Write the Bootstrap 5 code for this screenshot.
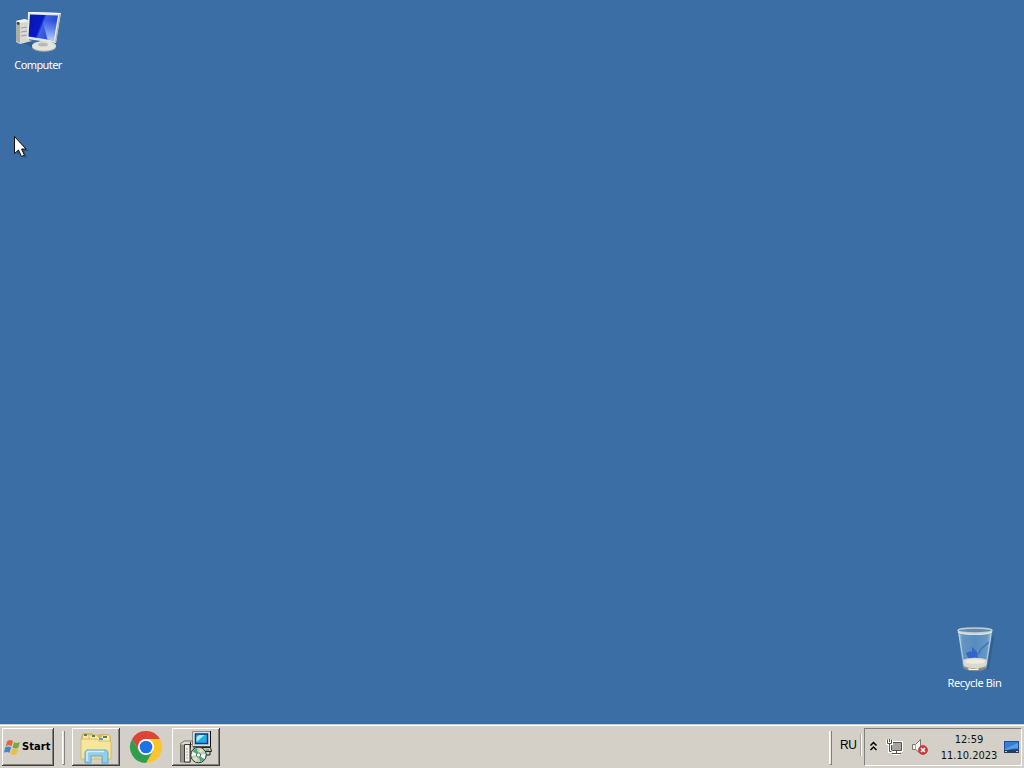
<!DOCTYPE html>
<html lang="en">
<head>
    <meta charset="UTF-8">
    <meta name="viewport" content="width=device-width, initial-scale=1.0">
    <title>Desktop</title>
    <link href="https://cdn.jsdelivr.net/npm/bootstrap@5.3.0/dist/css/bootstrap.min.css" rel="stylesheet">
    <style>
        :root {
            --desktop: #3a6ea5;
            --face: #d4d0c8;
            --shade: #808080;
            --dark: #404040;
        }

        body {
            background-color: var(--desktop);
            color: #111;
            font-family: "DejaVu Sans Condensed", "DejaVu Sans", sans-serif;
            font-stretch: condensed;
            font-size: 11px;
            line-height: 16px;
            cursor: default;
        }

        svg {
            display: block;
            flex: none;
        }

        .shortcut {
            width: 76px;
            color: #fff;
            font-family: "Noto Sans", sans-serif;
            font-stretch: normal;
            letter-spacing: -.6px;
            line-height: 14px;
        }

        .shortcut-bin {
            width: 99px;
            padding-bottom: 34px;
            letter-spacing: -.35px;
        }

        .pointer {
            left: 14px;
            top: 136px;
        }

        .taskbar {
            height: 44px;
            background-color: var(--face);
            border-top: 1px solid var(--face);
            box-shadow: inset 0 1px #fff;
            padding: 3px 2px 1px 2px;
        }

        .task-button {
            height: 38px;
            padding: 0;
            color: #000;
            background-color: var(--face);
            border: 0;
            border-radius: 0;
            box-shadow: inset -1px -1px var(--dark), inset 1px 1px #fff, inset -2px -2px var(--shade);
        }

        .start-button {
            width: 52px;
            padding-left: 2px;
            font-weight: bold;
            font-size: 11px;
            letter-spacing: .1px;
        }

        .start-button span {
            padding: 1px 0 0 1px;
        }

        .task-window {
            width: 48px;
        }

        .task-flat {
            width: 52px;
            padding-top: 3px;
        }

        .grip {
            width: 3px;
            height: 34px;
            margin-top: 3px;
            background-color: #ebe8e2;
            border-left: 1px solid #fff;
            border-right: 1px solid var(--shade);
            border-bottom: 1px solid var(--shade);
        }

        .grip-start {
            margin-right: 7px;
        }

        .tray {
            width: 158px;
            height: 38px;
            margin-left: 2px;
            border: 1px solid;
            border-color: var(--shade) #fff #fff var(--shade);
        }

        .lang-line {
            width: 1px;
            height: 22px;
            margin-top: 6px;
            background-color: #fff;
            border-left: 1px solid #aaa69f;
            box-sizing: content-box;
        }

        .lang {
            width: 16px;
            padding-top: 9px;
            color: #000;
            font-family: "Liberation Sans", sans-serif;
            font-stretch: normal;
            font-size: 12px;
            letter-spacing: -.5px;
        }

        .clock {
            width: 58px;
            margin-left: 11px;
            padding-top: 2px;
        }

        .show-desktop {
            margin-left: 6px;
        }
    </style>
</head>
<body class="vh-100 overflow-hidden d-flex flex-column">
    <main class="flex-grow-1 d-flex justify-content-between position-relative">
        <!-- Computer -->
        <div class="shortcut d-flex flex-column align-items-center align-self-start pt-2">
            <svg width="48" height="50" viewBox="0 0 48 50">
                <defs>
                    <linearGradient id="screen" x1="0" y1="0" x2="1" y2=".35">
                        <stop offset="0" stop-color="#0718a0"/>
                        <stop offset=".48" stop-color="#0719cc"/>
                        <stop offset=".56" stop-color="#3d62e4"/>
                        <stop offset="1" stop-color="#1d46d8"/>
                    </linearGradient>
                    <linearGradient id="glow" x1="0" y1="0" x2="0" y2="1">
                        <stop offset=".2" stop-color="#b8d4ff" stop-opacity="0"/>
                        <stop offset="1" stop-color="#d5e7ff" stop-opacity=".85"/>
                    </linearGradient>
                </defs>
                <path d="M10 35l5-2 5 3-3 3z" fill="#244d7b" opacity=".5"/>
                <path d="M2 13l9-2 4 2v19l3 1-12 3-4-2z" fill="#d9d9d4"/>
                <path d="M2 13l4 1v21l-4-2z" fill="#aaaea9"/>
                <path d="M2 13l9-2 4 2-9 2z" fill="#f3f3ee"/>
                <circle cx="4.200" cy="15.500" r="1.400" fill="#314948"/>
                <path d="M7 20l6-1M7 24l6-1M7 28l6-1" stroke="#999d9a"/>
                <path d="M26 32l9 1 1 5H24z" fill="#aeb5b2"/>
                <ellipse cx="30" cy="39" rx="12" ry="5" fill="#989e98"/>
                <ellipse cx="30" cy="38" rx="12" ry="4.800" fill="#e2e4dd"/>
                <ellipse cx="29" cy="36.500" rx="5" ry="2" fill="#b3bbb6"/>
                <path d="M14 4l33 1-5 30-29-4z" fill="#e4e6e1"/>
                <path d="M14 4l33 1v1L14 5z" fill="#fff"/>
                <path d="M16 6.500l28 1-4.500 25L14.500 28.500z" fill="url(#screen)"/>
                <path d="M27 7l17 .5-4.500 25-6-1z" fill="url(#glow)"/>
                <path d="M46 6l-4.500 28" stroke="#a9b0ad"/>
            </svg>
            <span>Computer</span>
        </div>

        <!-- Recycle Bin -->
        <div class="shortcut shortcut-bin d-flex flex-column align-items-center align-self-end">
            <svg width="48" height="50" viewBox="0 0 48 50">
                <defs>
                    <linearGradient id="glass">
                        <stop offset="0" stop-color="#bfd8e7"/>
                        <stop offset=".14" stop-color="#6b9bc7"/>
                        <stop offset=".5" stop-color="#5d91c4"/>
                        <stop offset=".85" stop-color="#6d9fc9"/>
                        <stop offset="1" stop-color="#b5cddd"/>
                    </linearGradient>
                </defs>
                <path d="M34 43l8-34 1 2-5 32z" fill="#274f78" opacity=".5"/>
                <path d="M7 5h34l-5 36c-1 5-23 5-24 0z" fill="url(#glass)" opacity=".85"/>
                <path d="M21 21l5 5 1 7-6-3zM15 27l5-2 4 6-6 3z" fill="#2857ca" opacity=".75"/>
                <path d="M38 16l-8 7-3 6" fill="none" stroke="#3f76af" stroke-width="1.500"/>
                <path d="M12 34c5-3 19-3 24 0l-1 7c-3 4-19 4-22 0z" fill="#d8d9cf"/>
                <ellipse cx="24" cy="35.500" rx="10" ry="2.300" fill="#eeeadd"/>
                <path d="M13 40c5 3 17 3 22 0l-1 3c-4 3-16 3-20 0z" fill="#8b8b86"/>
                <path d="M17 42c3 1 8 1 11 0l-1 2H18z" fill="#f5f5ec"/>
                <ellipse cx="24" cy="4.500" rx="17" ry="2.500" fill="#6489a9" stroke="#c5ced1" stroke-width="1.500"/>
                <path d="M7 6c7 3 27 3 34 0" fill="none" stroke="#dce2e2" stroke-width="1.500"/>
                <path d="M8 8l5 31M40 8l-5 31" stroke="#cedde5" opacity=".75"/>
            </svg>
            <span>Recycle Bin</span>
        </div>

        <!-- Mouse pointer over the desktop -->
        <svg class="pointer position-absolute" width="15" height="23" viewBox="0 0 15 23">
            <path d="M3 3v16l4-3 3 6 3-1-3-6h5z" fill="#17395d" opacity=".45"/>
            <path d="M.5.500v17l4-3.500 3 6.500 3-1.300-3-6.200h4.500z" fill="#fff" stroke="#111"/>
        </svg>
    </main>

    <footer class="taskbar d-flex align-items-start">
        <button type="button" class="btn task-button start-button d-flex align-items-center">
            <svg width="17" height="17" viewBox="0 0 16 16">
                <path d="M3 2c2-1.500 3.500-1.500 5.500 0L7 7C5 5.500 3.500 5.800 1.500 7z" fill="#df693a"/>
                <path d="M9.500 3c2 1 3.500 1 5.500-.5L13.500 8c-2 1.300-3.500 1-5.500 0z" fill="#72aa45"/>
                <path d="M1 8c2-1.200 4-1.200 5.700 0L5.200 13c-2-1.300-3.700-1-5.200 0z" fill="#4587c6"/>
                <path d="M7.800 9c2 1 3.500 1 5.500-.3L12 14c-2 1.200-3.700 1-5.700 0z" fill="#efbd3a"/>
            </svg>
            <span>Start</span>
        </button>
        <div class="grip grip-start ms-2"></div>

        <button type="button" class="btn task-button task-window d-flex align-items-center justify-content-center" aria-label="Explorer">
            <svg width="34" height="34" viewBox="0 0 34 34">
                <path d="M2 6l2-3h9l2 2h4l1-1h9l3 3v20H2z" fill="#d5b862"/>
                <path d="M4 5h9l2 3h16v17H4z" fill="#f6e69d"/>
                <path d="M10 5h8l2 3h10v17H10z" fill="#f8e8a4" stroke="#cbae58" stroke-width=".7"/>
                <path d="M22 7l2-2h6l1 3v17h-9z" fill="#ffefaf" stroke="#cfb262" stroke-width=".7"/>
                <path d="M2 9h16l2 2h12v18H2z" fill="#f7e59c" stroke="#cfb360" stroke-width=".8"/>
                <path d="M5 5h3M13 6h3M24 7h4" stroke="#537f63" stroke-width="2"/>
                <path d="M20 9h4" stroke="#5e9ccd" stroke-width="2"/>
                <path d="M6 33V23c0-2 1-3 3-3h17c2 0 3 1 3 3v10h-6v-7H12v7z" fill="#91cee9" stroke="#61a7ca"/>
                <path d="M8 31v-8c0-1 .5-1.500 2-1.500h15" fill="none" stroke="#d4effb" stroke-width="1.500"/>
                <path d="M14 28h7" stroke="#d9c47c"/>
            </svg>
        </button>

        <div class="task-flat d-flex justify-content-center">
            <svg width="34" height="34" viewBox="0 0 34 34">
                <path d="M3.140 8A16 16 0 0 1 30.860 8H17l-6.930 12z" fill="#db4437"/>
                <path d="M30.860 8A16 16 0 0 1 17 32l6.930-12L17 8z" fill="#fbc62d"/>
                <path d="M3.140 8A16 16 0 0 0 17 32l6.930-12H10.070z" fill="#2f9e4f"/>
                <circle cx="17" cy="16" r="8" fill="#fff"/>
                <circle cx="17" cy="16" r="6.300" fill="#1c73e8"/>
            </svg>
        </div>

        <button type="button" class="btn task-button task-window d-flex align-items-center justify-content-center" aria-label="Setup">
            <svg width="34" height="34" viewBox="0 0 34 34">
                <path d="M13.500 1.500h18v15h-18z" fill="#dcddd6" stroke="#8d8d88"/>
                <path d="M31.500 1v16H14" fill="none" stroke="#111"/>
                <path d="M16.500 4h12v9.500h-12z" fill="#27aee0" stroke="#093a8c" stroke-width="1.500"/>
                <path d="M17.500 12V7l3-2h5z" fill="#a5efff"/>
                <path d="M18.500 17.500h13l1 4h-13z" fill="#c8c8bf" stroke="#222"/>
                <path d="M27 20h3" stroke="#32893b"/>
                <path d="M31 22v3h-4" fill="none" stroke="#222"/>
                <path d="M1.500 13.500l4-2.500h8v3l-2 1v17h-10z" fill="#ddd9cc" stroke="#77736b"/>
                <path d="M5.500 14.500h5.500V32H5.500z" fill="#f0eee7" stroke="#3c3a36"/>
                <path d="M2 14.500h3V32H2z" fill="#99958d"/>
                <path d="M8 18v11" stroke="#aaa" stroke-dasharray="2 1"/>
                <path d="M11.500 12v6" stroke="#222"/>
                <circle cx="19.500" cy="25" r="7.800" fill="#b8cfc3" stroke="#2a3a35"/>
                <path d="M19.500 25l-6-4 4-3zM19.500 25l6 4-4 3z" fill="#4ca777"/>
                <path d="M19.500 25l1-7 4 2zM19.500 25l-2 7-4-3z" fill="#e6e3ad"/>
                <path d="M19.500 25l-7 1 1-4zM19.500 25l7-1-1 5z" fill="#f5f7ef"/>
                <circle cx="19.500" cy="25" r="2.200" fill="#eee" stroke="#55736a"/>
            </svg>
        </button>

        <div class="ms-auto d-flex">
            <div class="grip me-2"></div>
            <span class="lang">RU</span>
            <div class="lang-line ms-1"></div>
            <div class="tray d-flex align-items-center">
                <svg class="ms-1" width="9" height="12" viewBox="0 0 9 12">
                    <path d="M1.500 4.500l3-3 3 3M1.500 9l3-3 3 3" fill="none" stroke="#000" stroke-width="1.500"/>
                </svg>
                <svg class="ms-2" width="18" height="18" viewBox="0 0 18 18">
                    <path d="M5.500 4.500h10v8h-10z" fill="#b6b5af" stroke="#fff" stroke-width="3"/>
                    <path d="M6.500 15.500h8" stroke="#fff" stroke-width="3"/>
                    <path d="M5.500 4.500h10v8h-10z" fill="#a5a49e" stroke="#55554f"/>
                    <path d="M6 15.500h9M10.500 13v2" stroke="#55554f"/>
                    <path d="M1.500 1.500v4h4v-4M3.500 5.500v8h2" fill="none" stroke="#fff" stroke-width="3"/>
                    <path d="M1.500 1.500v4h4v-4M3.500 1v3M3.500 5.500v8h2" fill="none" stroke="#55554f"/>
                </svg>
                <svg class="ms-2" width="17" height="18" viewBox="0 0 17 18">
                    <path d="M.500 6.500h3l5-5v14l-5-4h-3z" fill="#f5f4ee" stroke="#797873"/>
                    <path d="M3.500 7v4" stroke="#aaa9a3"/>
                    <circle cx="11" cy="12" r="4.500" fill="#d8353a" stroke="#b5343a" stroke-width=".7"/>
                    <path d="M9 10l4 4m0-4l-4 4" stroke="#fff" stroke-width="1.600"/>
                </svg>
                <div class="clock text-center">
                    <div>12:59</div>
                    <div>11.10.2023</div>
                </div>
                <svg class="show-desktop" width="16" height="15" viewBox="0 0 16 15">
                    <path d="M0 1h15v11H0z" fill="#1b4e9b"/>
                    <path d="M1 2h13v7H1z" fill="#347ed4"/>
                    <path d="M1 9L14 3v5c-5 0-8 2-13 2z" fill="#5a9fe4"/>
                    <path d="M0 10h15v3H0z" fill="#273d5b"/>
                    <path d="M1 11.500h2M12 11.500h2" stroke="#b6cbdc"/>
                </svg>
            </div>
        </div>
    </footer>

    <script src="https://cdn.jsdelivr.net/npm/bootstrap@5.3.0/dist/js/bootstrap.bundle.min.js"></script>
</body>
</html>
